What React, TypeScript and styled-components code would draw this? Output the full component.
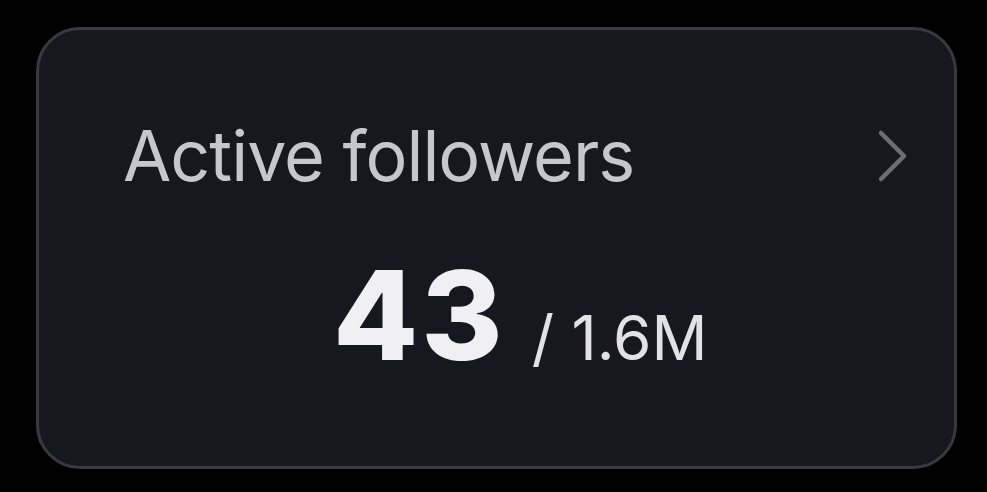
import styled, { createGlobalStyle } from "styled-components";

const GlobalStyle = createGlobalStyle`
  html, body {
    margin: 0;
    padding: 0;
    background: #000;
  }
  body {
    font-family: Inter, "Liberation Sans", sans-serif;
    -webkit-font-smoothing: antialiased;
  }
`;

const Page = styled.div`
  width: 987px;
  height: 492px;
  box-sizing: border-box;
  padding: 27px 30px 23px 36px;
  background: #000;
`;

const Card = styled.div`
  box-sizing: border-box;
  height: 100%;
  border: 3px solid #3a3a3e;
  border-radius: 44px;
  background: #17171f;
  display: flex;
  flex-direction: column;
  padding: 91px 44px 0 84px;
`;

const Header = styled.div`
  display: flex;
  align-items: center;
  justify-content: space-between;
`;

const Title = styled.span`
  font-size: 70px;
  line-height: 1;
  font-weight: 400;
  color: #c6c6ce;
  letter-spacing: -1px;
`;

const ValueRow = styled.div`
  display: flex;
  align-items: baseline;
  gap: 26px;
  margin-top: 62px;
  padding-left: 210px;
`;

const Value = styled.span`
  font-size: 124px;
  line-height: 1;
  font-weight: 800;
  color: #f0f0f3;
  letter-spacing: 3px;
`;

const Total = styled.span`
  font-size: 62px;
  line-height: 1;
  color: #e2e2e6;
`;

const Chevron = () => (
  <svg width="34" height="54" viewBox="0 0 34 54" fill="none">
    <path
      d="M5 4 L28 27 L5 50"
      stroke="#6c6c72"
      strokeWidth="4.5"
      strokeLinecap="round"
      strokeLinejoin="round"
    />
  </svg>
);

export default function App() {
  return (
    <>
      <GlobalStyle />
      <Page>
        <Card>
          <Header>
            <Title>Active followers</Title>
            <Chevron />
          </Header>
          <ValueRow>
            <Value>43</Value>
            <Total>/ 1.6M</Total>
          </ValueRow>
        </Card>
      </Page>
    </>
  );
}
